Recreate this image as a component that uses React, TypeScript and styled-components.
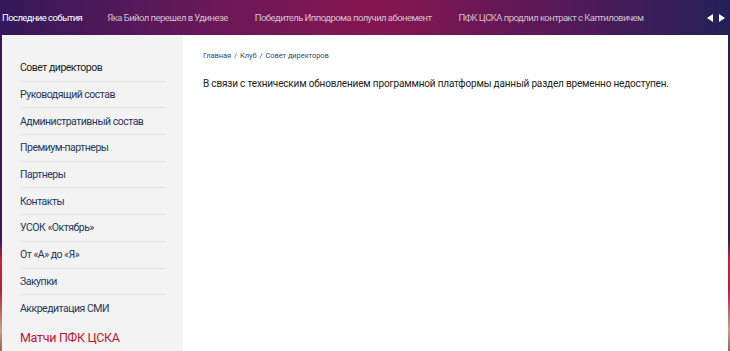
import styled, { createGlobalStyle } from "styled-components";

const GlobalStyle = createGlobalStyle`
  html, body {
    margin: 0;
    padding: 0;
  }
  body {
    width: 730px;
    height: 351px;
    overflow: hidden;
    font-family: Roboto, "Liberation Sans", Arial, sans-serif;
    background:
      linear-gradient(180deg, transparent 0, transparent 240px, #c8203c 260px, #b22040 290px, #c9a08a 330px, #8a6a5a 351px),
      linear-gradient(90deg, #36185a 0%, #6a1858 35%, #86164f 55%, #4a1a5c 80%, #1e2358 100%);
  }
`;

const Page = styled.div`
  display: flex;
  flex-direction: column;
  height: 351px;
`;

const Ticker = styled.div`
  height: 35px;
  display: flex;
  align-items: center;
  padding: 0 0 0 2px;
  background: linear-gradient(90deg, #33195a 0%, #6b1858 30%, #86164f 52%, #5a1858 75%, #232158 100%);
`;

const TickerTitle = styled.span`
  color: #ffffff;
  font-size: 9.5px;
  letter-spacing: -0.58px;
  margin-right: 25px;
  white-space: nowrap;
`;

const TickerItem = styled.span`
  color: rgba(255, 255, 255, 0.72);
  font-size: 9.5px;
  letter-spacing: -0.55px;
  margin-right: 27px;
  white-space: nowrap;
`;

const Arrows = styled.div`
  margin-left: auto;
  margin-right: 5px;
  display: flex;
  gap: 6px;
`;

const Arrow = styled.span<{ $dir: "left" | "right" }>`
  width: 0;
  height: 0;
  border-top: 4.5px solid transparent;
  border-bottom: 4.5px solid transparent;
  ${(p) =>
    p.$dir === "left"
      ? "border-right: 6px solid #ffffff;"
      : "border-left: 6px solid #ffffff;"}
`;

const Body = styled.div`
  flex: 1;
  display: flex;
  margin: 0 2px 0 2px;
`;

const Sidebar = styled.nav`
  width: 181px;
  background: #f3f3f3;
  padding: 20px 18px 0 18px;
  box-sizing: border-box;
`;

const MenuList = styled.ul`
  list-style: none;
  margin: 0;
  padding: 0;
`;

const MenuItem = styled.li<{ $active?: boolean }>`
  height: 26.7px;
  display: flex;
  align-items: center;
  font-size: 10.5px;
  letter-spacing: -0.5px;
  color: ${(p) => (p.$active ? "#222222" : "#25375c")};
  border-bottom: 1px solid #e2e2e2;
  box-sizing: border-box;
  white-space: nowrap;
  &:last-child {
    border-bottom: none;
  }
`;

const SectionTitle = styled.div`
  margin-top: 8px;
  font-size: 12.5px;
  letter-spacing: -0.3px;
  color: #c0142e;
`;

const Main = styled.main`
  flex: 1;
  background: #ffffff;
  padding: 16px 20px;
`;

const Breadcrumbs = styled.div`
  font-size: 7.5px;
  letter-spacing: -0.08px;
  color: #3b4a68;
  display: flex;
  gap: 3px;
`;

const Message = styled.p`
  margin: 18px 0 0 0;
  font-size: 10px;
  letter-spacing: -0.17px;
  color: #222222;
  white-space: nowrap;
`;

const news = [
  "Яка Бийол перешел в Удинезе",
  "Победитель Ипподрома получил абонемент",
  "ПФК ЦСКА продлил контракт с Каптиловичем",
];

const menu = [
  "Совет директоров",
  "Руководящий состав",
  "Административный состав",
  "Премиум-партнеры",
  "Партнеры",
  "Контакты",
  "УСОК «Октябрь»",
  "От «А» до «Я»",
  "Закупки",
  "Аккредитация СМИ",
];

export default function App() {
  return (
    <>
      <GlobalStyle />
      <Page>
        <Ticker>
          <TickerTitle>Последние события</TickerTitle>
          {news.map((n) => (
            <TickerItem key={n}>{n}</TickerItem>
          ))}
          <Arrows>
            <Arrow $dir="left" />
            <Arrow $dir="right" />
          </Arrows>
        </Ticker>
        <Body>
          <Sidebar>
            <MenuList>
              {menu.map((m, i) => (
                <MenuItem key={m} $active={i === 0}>
                  {m}
                </MenuItem>
              ))}
            </MenuList>
            <SectionTitle>Матчи ПФК ЦСКА</SectionTitle>
          </Sidebar>
          <Main>
            <Breadcrumbs>
              <span>Главная</span>/<span>Клуб</span>/<span>Совет директоров</span>
            </Breadcrumbs>
            <Message>
              В связи с техническим обновлением программной платформы данный
              раздел временно недоступен.
            </Message>
          </Main>
        </Body>
      </Page>
    </>
  );
}
